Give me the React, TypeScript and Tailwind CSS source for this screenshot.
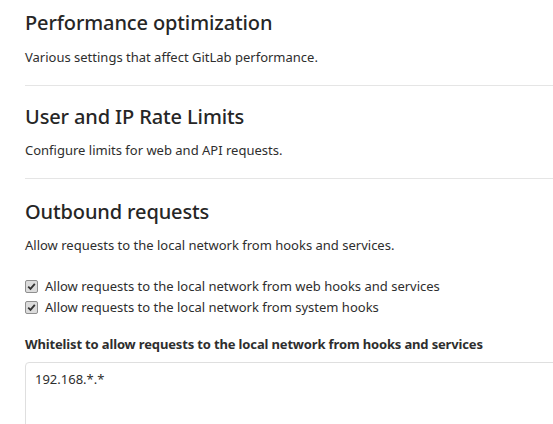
import React from "react";

function Check() {
  return (
    <span className="flex h-[13px] w-[13px] shrink-0 items-center justify-center rounded-[2px] border border-[#8f8f8f] bg-[#dcdcdc]">
      <svg width="9" height="9" viewBox="0 0 9 9">
        <path d="M1.2 4.6 L3.5 6.9 L7.8 1.8" fill="none" stroke="#333" strokeWidth="1.8" />
      </svg>
    </span>
  );
}

export default function App() {
  return (
    <div
      className="min-h-[424px] w-[553px] overflow-hidden bg-white pl-[25px] text-[#2e2e2e]"
      style={{ fontFamily: '"Noto Sans", "Open Sans", sans-serif' }}
    >
      <section className="border-b border-[#e5e5e5] pt-[9px] pb-[19px]">
        <h2 className="text-[20px] leading-[28px] font-medium tracking-[-0.12px] text-[#262626]">Performance optimization</h2>
        <p className="mt-[11px] text-[13px] leading-[18px]">Various settings that affect GitLab performance.</p>
      </section>
      <section className="border-b border-[#e5e5e5] pt-[17px] pb-[19px]">
        <h2 className="text-[20px] leading-[28px] font-medium tracking-[-0.12px] text-[#262626]">User and IP Rate Limits</h2>
        <p className="mt-[10px] text-[13px] leading-[18px]">Configure limits for web and API requests.</p>
      </section>
      <section className="pt-[19px]">
        <h2 className="text-[20px] leading-[28px] font-medium tracking-[-0.12px] text-[#262626]">Outbound requests</h2>
        <p className="mt-[10px] text-[13px] leading-[18px]">Allow requests to the local network from hooks and services.</p>
        <div className="mt-[23px] flex flex-col gap-[3px]">
          <label className="flex items-center gap-[7px] text-[13px] leading-[18px]">
            <Check />
            Allow requests to the local network from web hooks and services
          </label>
          <label className="flex items-center gap-[7px] text-[13px] leading-[18px]">
            <Check />
            Allow requests to the local network from system hooks
          </label>
        </div>
        <div className="mt-[19px] text-[13px] leading-[18px] font-bold tracking-[-0.15px]">
          Whitelist to allow requests to the local network from hooks and services
        </div>
        <div className="mt-[9px] h-[80px] w-[560px] rounded-[4px] border border-[#dfdfdf] px-[9px] pt-[7px] text-[13px] leading-[18px]">
          192.168.*.*
        </div>
      </section>
    </div>
  );
}
